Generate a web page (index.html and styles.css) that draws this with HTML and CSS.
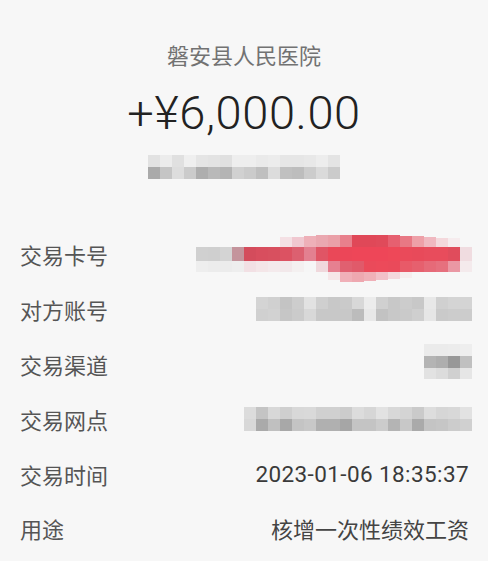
FILE: index.html
```html
<!DOCTYPE html>
<html lang="zh-CN">
<head>
<meta charset="utf-8">
<title>交易详情</title>
<link rel="stylesheet" href="styles.css">
</head>
<body>
<main class="page">
  <section class="summary">
    <div class="payer">磐安县人民医院</div>
    <div class="amount">+¥6,000.00</div>
    <svg class="mosaic mosaic-sub" width="192" height="24" viewBox="0 0 192 24" aria-hidden="true">
      <g>
        <rect x="0" y="0" width="12" height="12" fill="#e2e2e2"/><rect x="12" y="0" width="12" height="12" fill="#ececec"/><rect x="24" y="0" width="12" height="12" fill="#e0e0e0"/><rect x="36" y="0" width="12" height="12" fill="#efefef"/><rect x="48" y="0" width="12" height="12" fill="#e5e5e5"/><rect x="60" y="0" width="12" height="12" fill="#e3e3e3"/><rect x="72" y="0" width="12" height="12" fill="#e0e0e0"/><rect x="84" y="0" width="12" height="12" fill="#eeeeee"/><rect x="96" y="0" width="12" height="12" fill="#eeeeee"/><rect x="108" y="0" width="12" height="12" fill="#eaeaea"/><rect x="120" y="0" width="12" height="12" fill="#ececec"/><rect x="132" y="0" width="12" height="12" fill="#e6e6e6"/><rect x="144" y="0" width="12" height="12" fill="#e6e6e6"/><rect x="156" y="0" width="12" height="12" fill="#e8e8e8"/><rect x="168" y="0" width="12" height="12" fill="#ededed"/><rect x="180" y="0" width="12" height="12" fill="#e4e4e4"/>
        <rect x="0" y="12" width="12" height="12" fill="#aaaaaa"/><rect x="12" y="12" width="12" height="12" fill="#c5c5c5"/><rect x="24" y="12" width="12" height="12" fill="#dddddd"/><rect x="36" y="12" width="12" height="12" fill="#cbcbcb"/><rect x="48" y="12" width="12" height="12" fill="#aeaeae"/><rect x="60" y="12" width="12" height="12" fill="#b9b9b9"/><rect x="72" y="12" width="12" height="12" fill="#b4b4b4"/><rect x="84" y="12" width="12" height="12" fill="#d1d1d1"/><rect x="96" y="12" width="12" height="12" fill="#cbcbcb"/><rect x="108" y="12" width="12" height="12" fill="#bfbfbf"/><rect x="120" y="12" width="12" height="12" fill="#dcdcdc"/><rect x="132" y="12" width="12" height="12" fill="#c0c0c0"/><rect x="144" y="12" width="12" height="12" fill="#bdbdbd"/><rect x="156" y="12" width="12" height="12" fill="#cccccc"/><rect x="168" y="12" width="12" height="12" fill="#dadada"/><rect x="180" y="12" width="12" height="12" fill="#cbcbcb"/>
      </g>
    </svg>
  </section>

  <section class="details">
    <div class="row">
      <span class="label">交易卡号</span>
      <svg class="mosaic mosaic-card" width="276" height="48" viewBox="0 0 276 48" aria-hidden="true">
        <g>
          <rect x="84" y="2" width="12" height="10" fill="#f4e0e4"/><rect x="96" y="2" width="12" height="10" fill="#f0c8d0"/><rect x="108" y="1" width="12" height="11" fill="#eeb0b8"/><rect x="120" y="0" width="12" height="12" fill="#eaa8b0"/><rect x="132" y="0" width="12" height="12" fill="#eaa0a8"/><rect x="144" y="0" width="12" height="12" fill="#e8808c"/><rect x="156" y="0" width="12" height="12" fill="#e04858"/><rect x="168" y="0" width="12" height="12" fill="#e04858"/><rect x="180" y="0" width="12" height="12" fill="#e04a5a"/><rect x="192" y="0" width="12" height="12" fill="#e66070"/><rect x="204" y="1" width="12" height="11" fill="#e87884"/><rect x="216" y="1" width="12" height="11" fill="#eea0a8"/><rect x="228" y="2" width="12" height="10" fill="#f0b8c0"/><rect x="240" y="3" width="12" height="9" fill="#f4d8dc"/><rect x="252" y="3" width="12" height="9" fill="#f6ecee"/>
          <rect x="0" y="12" width="12" height="14" fill="#d0d0d0"/><rect x="12" y="12" width="12" height="14" fill="#cfcfcf"/><rect x="24" y="12" width="12" height="14" fill="#d4d4d4"/><rect x="36" y="12" width="12" height="14" fill="#c4949c"/><rect x="48" y="12" width="12" height="14" fill="#d44c5c"/><rect x="60" y="12" width="12" height="14" fill="#d84e5e"/><rect x="72" y="12" width="12" height="14" fill="#d8505f"/><rect x="84" y="12" width="12" height="14" fill="#dc5262"/><rect x="96" y="12" width="12" height="14" fill="#dc6070"/><rect x="108" y="12" width="12" height="14" fill="#e38090"/><rect x="120" y="12" width="12" height="14" fill="#e05565"/><rect x="132" y="12" width="12" height="14" fill="#ea4858"/><rect x="144" y="12" width="12" height="14" fill="#ec4658"/><rect x="156" y="12" width="12" height="14" fill="#ee4658"/><rect x="168" y="12" width="12" height="14" fill="#ee4658"/><rect x="180" y="12" width="12" height="14" fill="#ee4658"/><rect x="192" y="12" width="12" height="14" fill="#ee4858"/><rect x="204" y="12" width="12" height="14" fill="#ea4a5a"/><rect x="216" y="12" width="12" height="14" fill="#e84a5a"/><rect x="228" y="12" width="12" height="14" fill="#e84c5c"/><rect x="240" y="12" width="12" height="14" fill="#e84c5c"/><rect x="252" y="12" width="12" height="14" fill="#e04c5c"/><rect x="264" y="12" width="12" height="14" fill="#f0dce0"/>
          <rect x="0" y="26" width="12" height="11" fill="#eeeeee"/><rect x="12" y="26" width="12" height="11" fill="#ececec"/><rect x="24" y="26" width="12" height="11" fill="#ececec"/><rect x="36" y="26" width="12" height="11" fill="#eeeeee"/><rect x="48" y="26" width="12" height="11" fill="#f2e0e4"/><rect x="60" y="26" width="12" height="11" fill="#f4e6e8"/><rect x="72" y="26" width="12" height="11" fill="#f4eaec"/><rect x="84" y="26" width="12" height="11" fill="#f2e8ea"/><rect x="96" y="26" width="12" height="11" fill="#f4f0f0"/><rect x="108" y="26" width="12" height="11" fill="#f6f6f6"/><rect x="120" y="26" width="12" height="11" fill="#f0d8dc"/><rect x="132" y="26" width="12" height="11" fill="#e68090"/><rect x="144" y="26" width="12" height="11" fill="#e06070"/><rect x="156" y="26" width="12" height="11" fill="#e05a6a"/><rect x="168" y="26" width="12" height="11" fill="#ea4a5a"/><rect x="180" y="26" width="12" height="11" fill="#ec4a5a"/><rect x="192" y="26" width="12" height="11" fill="#ea4a5a"/><rect x="204" y="26" width="12" height="11" fill="#e85a68"/><rect x="216" y="26" width="12" height="11" fill="#e6606e"/><rect x="228" y="26" width="12" height="11" fill="#e66a78"/><rect x="240" y="26" width="12" height="11" fill="#e6707e"/><rect x="252" y="26" width="12" height="11" fill="#ea98a4"/><rect x="264" y="26" width="12" height="11" fill="#f4eaec"/>
          <rect x="132" y="37" width="12" height="8" fill="#f6e6e8"/><rect x="144" y="37" width="12" height="10" fill="#f0b0b8"/><rect x="156" y="37" width="12" height="10" fill="#eea8b0"/><rect x="168" y="37" width="12" height="9" fill="#f0b0b8"/><rect x="180" y="37" width="12" height="8" fill="#f2c0c8"/><rect x="192" y="37" width="12" height="7" fill="#f4d8dc"/><rect x="204" y="37" width="12" height="6" fill="#f6eeee"/>
        </g>
      </svg>
    </div>
    <div class="row">
      <span class="label">对方账号</span>
      <svg class="mosaic" width="216" height="24" viewBox="0 0 216 24" aria-hidden="true">
        <g>
          <rect x="0" y="0" width="12" height="12" fill="#d4d4d4"/><rect x="12" y="0" width="12" height="12" fill="#d0d0d0"/><rect x="24" y="0" width="12" height="12" fill="#c4c4c4"/><rect x="36" y="0" width="12" height="12" fill="#cdcdcd"/><rect x="48" y="0" width="12" height="12" fill="#e2e2e2"/><rect x="60" y="0" width="12" height="12" fill="#cfcfcf"/><rect x="72" y="0" width="12" height="12" fill="#c8c8c8"/><rect x="84" y="0" width="12" height="12" fill="#cacaca"/><rect x="96" y="0" width="12" height="12" fill="#d8d8d8"/><rect x="108" y="0" width="12" height="12" fill="#ececec"/><rect x="120" y="0" width="12" height="12" fill="#d0d0d0"/><rect x="132" y="0" width="12" height="12" fill="#c8c8c8"/><rect x="144" y="0" width="12" height="12" fill="#cccccc"/><rect x="156" y="0" width="12" height="12" fill="#c8c8c8"/><rect x="168" y="0" width="12" height="12" fill="#e8e8e8"/><rect x="180" y="0" width="12" height="12" fill="#d0d0d0"/><rect x="192" y="0" width="12" height="12" fill="#d4d4d4"/><rect x="204" y="0" width="12" height="12" fill="#d4d4d4"/>
          <rect x="0" y="12" width="12" height="12" fill="#d0d0d0"/><rect x="12" y="12" width="12" height="12" fill="#d2d2d2"/><rect x="24" y="12" width="12" height="12" fill="#c6c6c6"/><rect x="36" y="12" width="12" height="12" fill="#cbcbcb"/><rect x="48" y="12" width="12" height="12" fill="#d8d8d8"/><rect x="60" y="12" width="12" height="12" fill="#c8c8c8"/><rect x="72" y="12" width="12" height="12" fill="#c8c8c8"/><rect x="84" y="12" width="12" height="12" fill="#c8c8c8"/><rect x="96" y="12" width="12" height="12" fill="#bcbcbc"/><rect x="108" y="12" width="12" height="12" fill="#e8e8e8"/><rect x="120" y="12" width="12" height="12" fill="#c2c2c2"/><rect x="132" y="12" width="12" height="12" fill="#c8c8c8"/><rect x="144" y="12" width="12" height="12" fill="#cacaca"/><rect x="156" y="12" width="12" height="12" fill="#cfcfcf"/><rect x="168" y="12" width="12" height="12" fill="#e6e6e6"/><rect x="180" y="12" width="12" height="12" fill="#cacaca"/><rect x="192" y="12" width="12" height="12" fill="#cccccc"/><rect x="204" y="12" width="12" height="12" fill="#cccccc"/>
        </g>
      </svg>
    </div>
    <div class="row">
      <span class="label">交易渠道</span>
      <svg class="mosaic mosaic-channel" width="48" height="35" viewBox="0 0 48 35" aria-hidden="true">
        <g>
          <rect x="0" y="0" width="12" height="12" fill="#ebebeb"/><rect x="12" y="0" width="12" height="12" fill="#ebebeb"/><rect x="24" y="0" width="12" height="12" fill="#ececec"/><rect x="36" y="0" width="12" height="12" fill="#eeeeee"/>
          <rect x="0" y="12" width="12" height="12" fill="#b4b4b4"/><rect x="12" y="12" width="12" height="12" fill="#aeaeae"/><rect x="24" y="12" width="12" height="12" fill="#989898"/><rect x="36" y="12" width="12" height="12" fill="#c0c0c0"/>
          <rect x="0" y="24" width="12" height="11" fill="#e2e2e2"/><rect x="12" y="24" width="12" height="11" fill="#dcdcdc"/><rect x="24" y="24" width="12" height="11" fill="#d0d0d0"/><rect x="36" y="24" width="12" height="11" fill="#e6e6e6"/>
        </g>
      </svg>
    </div>
    <div class="row">
      <span class="label">交易网点</span>
      <svg class="mosaic" width="228" height="24" viewBox="0 0 228 24" aria-hidden="true">
        <g>
          <rect x="0" y="0" width="12" height="12" fill="#dcdcdc"/><rect x="12" y="0" width="12" height="12" fill="#c4c4c4"/><rect x="24" y="0" width="12" height="12" fill="#d8d8d8"/><rect x="36" y="0" width="12" height="12" fill="#cfcfcf"/><rect x="48" y="0" width="12" height="12" fill="#d8d8d8"/><rect x="60" y="0" width="12" height="12" fill="#d9d9d9"/><rect x="72" y="0" width="12" height="12" fill="#d0d0d0"/><rect x="84" y="0" width="12" height="12" fill="#d0d0d0"/><rect x="96" y="0" width="12" height="12" fill="#cccccc"/><rect x="108" y="0" width="12" height="12" fill="#dcdcdc"/><rect x="120" y="0" width="12" height="12" fill="#d6d6d6"/><rect x="132" y="0" width="12" height="12" fill="#e2e2e2"/><rect x="144" y="0" width="12" height="12" fill="#d8d8d8"/><rect x="156" y="0" width="12" height="12" fill="#d4d4d4"/><rect x="168" y="0" width="12" height="12" fill="#cacaca"/><rect x="180" y="0" width="12" height="12" fill="#dddddd"/><rect x="192" y="0" width="12" height="12" fill="#d6d6d6"/><rect x="204" y="0" width="12" height="12" fill="#d8d8d8"/><rect x="216" y="0" width="12" height="12" fill="#e2e2e2"/>
          <rect x="0" y="12" width="12" height="12" fill="#d8d8d8"/><rect x="12" y="12" width="12" height="12" fill="#aaaaaa"/><rect x="24" y="12" width="12" height="12" fill="#c0c0c0"/><rect x="36" y="12" width="12" height="12" fill="#a8a8a8"/><rect x="48" y="12" width="12" height="12" fill="#c4c4c4"/><rect x="60" y="12" width="12" height="12" fill="#c8c8c8"/><rect x="72" y="12" width="12" height="12" fill="#b0b0b0"/><rect x="84" y="12" width="12" height="12" fill="#b0b0b0"/><rect x="96" y="12" width="12" height="12" fill="#a6a6a6"/><rect x="108" y="12" width="12" height="12" fill="#c4c4c4"/><rect x="120" y="12" width="12" height="12" fill="#c4c4c4"/><rect x="132" y="12" width="12" height="12" fill="#cccccc"/><rect x="144" y="12" width="12" height="12" fill="#b4b4b4"/><rect x="156" y="12" width="12" height="12" fill="#c8c8c8"/><rect x="168" y="12" width="12" height="12" fill="#aaaaaa"/><rect x="180" y="12" width="12" height="12" fill="#c4c4c4"/><rect x="192" y="12" width="12" height="12" fill="#c6c6c6"/><rect x="204" y="12" width="12" height="12" fill="#cccccc"/><rect x="216" y="12" width="12" height="12" fill="#d0d0d0"/>
        </g>
      </svg>
    </div>
    <div class="row">
      <span class="label">交易时间</span>
      <span class="value value-time">2023-01-06 18:35:37</span>
    </div>
    <div class="row">
      <span class="label">用途</span>
      <span class="value">核增一次性绩效工资</span>
    </div>
  </section>
</main>
</body>
</html>
```

FILE: styles.css
```css
html, body {
  margin: 0;
  padding: 0;
  background: #f7f7f7;
}

body {
  font-family: "Noto Sans CJK SC", "Noto Sans", sans-serif;
  color: #444;
}

.page {
  width: 488px;
  height: 561px;
  overflow: hidden;
}

.summary {
  display: flex;
  flex-direction: column;
  align-items: center;
  padding-top: 38px;
}

.payer {
  font-size: 22px;
  line-height: 32px;
  color: #727272;
}

.amount {
  margin-top: 15px;
  font-family: Roboto, "Noto Sans", sans-serif;
  font-weight: 300;
  font-size: 47px;
  line-height: 56px;
  color: #222;
  letter-spacing: 0.6px;
}

.mosaic {
  display: block;
  flex: none;
}

.mosaic-sub {
  margin-top: 14px;
}

.details {
  margin-top: 48px;
  padding: 0 16px 0 20px;
}

.row {
  display: flex;
  align-items: center;
  justify-content: space-between;
  height: 54.8px;
}

.label {
  font-size: 22px;
  color: #555;
}

.value {
  font-size: 22px;
  color: #444;
  margin-right: 3px;
}

.value-time {
  font-family: Roboto, "Noto Sans", sans-serif;
  font-size: 22.5px;
  letter-spacing: 0.4px;
  color: #3a3a3a;
}

.mosaic-card {
  margin-top: 9px;
}

.mosaic-channel {
  margin-top: -5px;
}
```
